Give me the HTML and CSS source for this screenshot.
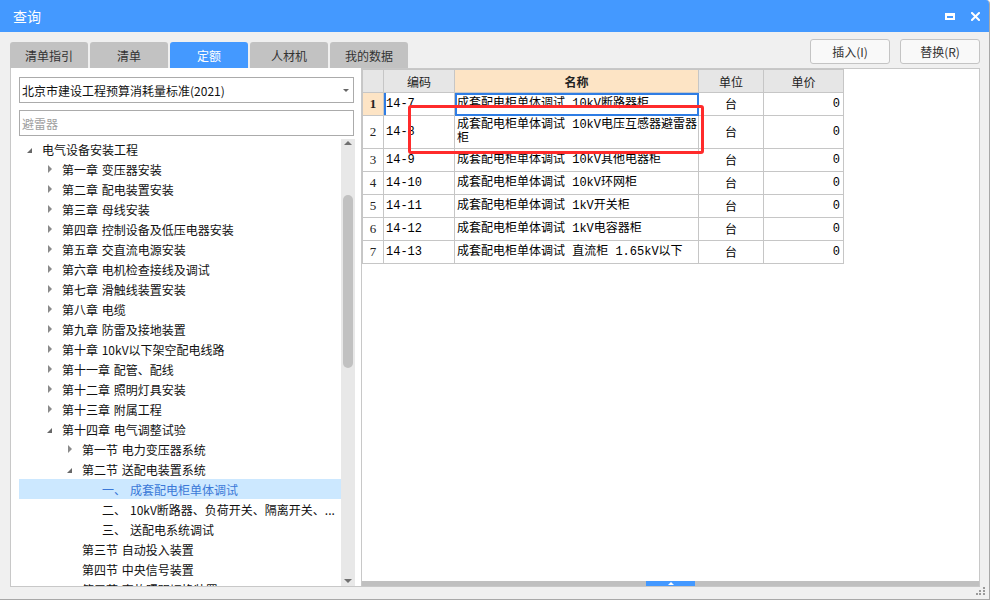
FILE: index.html
```html
<!DOCTYPE html>
<html lang="zh-CN">
<head>
<meta charset="utf-8">
<title>查询</title>
<link rel="stylesheet" href="styles.css">
</head>
<body>
<div class="window">
  <div class="titlebar">
    <span class="title">查询</span>
    <div class="ctrls">
      <svg class="ic-max" width="10" height="7" viewBox="0 0 10 7"><path d="M0 0H10V7H0Z M2 3V5H8V3Z" fill="#fff" fill-rule="evenodd"/></svg>
      <svg class="ic-close" width="9" height="9" viewBox="0 0 9 9"><path d="M1 1L8 8M8 1L1 8" stroke="#fff" stroke-width="2" stroke-linecap="square"/></svg>
    </div>
  </div>
  <div class="main">
    <div class="toprow">
      <div class="tabs">
        <div class="tab">清单指引</div>
        <div class="tab">清单</div>
        <div class="tab on">定额</div>
        <div class="tab">人材机</div>
        <div class="tab">我的数据</div>
      </div>
      <div class="btns">
        <button class="btn">插入(I)</button>
        <button class="btn">替换(R)</button>
      </div>
    </div>
    <div class="panes">
      <div class="left">
        <div class="select"><span>北京市建设工程预算消耗量标准(2021)</span><span class="caret"></span></div>
        <div class="search">避雷器</div>
        <div class="treewrap">
          <div class="tree">
            <div class="row l0"><span class="tg ex"></span><span class="tx">电气设备安装工程</span></div>
            <div class="row l1"><span class="tg co"></span><span class="tx">第一章 变压器安装</span></div>
            <div class="row l1"><span class="tg co"></span><span class="tx">第二章 配电装置安装</span></div>
            <div class="row l1"><span class="tg co"></span><span class="tx">第三章 母线安装</span></div>
            <div class="row l1"><span class="tg co"></span><span class="tx">第四章 控制设备及低压电器安装</span></div>
            <div class="row l1"><span class="tg co"></span><span class="tx">第五章 交直流电源安装</span></div>
            <div class="row l1"><span class="tg co"></span><span class="tx">第六章 电机检查接线及调试</span></div>
            <div class="row l1"><span class="tg co"></span><span class="tx">第七章 滑触线装置安装</span></div>
            <div class="row l1"><span class="tg co"></span><span class="tx">第八章 电缆</span></div>
            <div class="row l1"><span class="tg co"></span><span class="tx">第九章 防雷及接地装置</span></div>
            <div class="row l1"><span class="tg co"></span><span class="tx">第十章 10kV以下架空配电线路</span></div>
            <div class="row l1"><span class="tg co"></span><span class="tx">第十一章 配管、配线</span></div>
            <div class="row l1"><span class="tg co"></span><span class="tx">第十二章 照明灯具安装</span></div>
            <div class="row l1"><span class="tg co"></span><span class="tx">第十三章 附属工程</span></div>
            <div class="row l1"><span class="tg ex"></span><span class="tx">第十四章 电气调整试验</span></div>
            <div class="row l2"><span class="tg co"></span><span class="tx">第一节 电力变压器系统</span></div>
            <div class="row l2"><span class="tg ex"></span><span class="tx">第二节 送配电装置系统</span></div>
            <div class="row l3 sel"><span class="tg"></span><span class="tx"><span class="n">一、</span>成套配电柜单体调试</span></div>
            <div class="row l3"><span class="tg"></span><span class="tx"><span class="n">二、</span>10kV断路器、负荷开关、隔离开关、...</span></div>
            <div class="row l3"><span class="tg"></span><span class="tx"><span class="n">三、</span>送配电系统调试</span></div>
            <div class="row l2"><span class="tg"></span><span class="tx">第三节 自动投入装置</span></div>
            <div class="row l2"><span class="tg"></span><span class="tx">第四节 中央信号装置</span></div>
            <div class="row l2"><span class="tg"></span><span class="tx">第五节 事故照明切换装置</span></div>
          </div>
          <div class="vscroll">
            <span class="up"></span>
            <span class="vthumb"></span>
            <span class="dn"></span>
          </div>
        </div>
      </div>
      <div class="right">
        <table class="grid">
          <colgroup>
            <col class="c-no"><col class="c-code"><col class="c-name"><col class="c-unit"><col class="c-price">
          </colgroup>
          <thead>
            <tr>
              <th></th>
              <th>编码</th>
              <th class="hot">名称</th>
              <th>单位</th>
              <th>单价</th>
            </tr>
          </thead>
          <tbody>
            <tr>
              <td class="no cur-row">1</td>
              <td class="code mark">14-7</td>
              <td class="name cur">成套配电柜单体调试 10kV断路器柜</td>
              <td class="unit">台</td>
              <td class="price">0</td>
            </tr>
            <tr class="tall">
              <td class="no">2</td>
              <td class="code">14-8</td>
              <td class="name">成套配电柜单体调试 10kV电压互感器避雷器<br>柜</td>
              <td class="unit">台</td>
              <td class="price">0</td>
            </tr>
            <tr>
              <td class="no">3</td>
              <td class="code">14-9</td>
              <td class="name">成套配电柜单体调试 10kV其他电器柜</td>
              <td class="unit">台</td>
              <td class="price">0</td>
            </tr>
            <tr>
              <td class="no">4</td>
              <td class="code">14-10</td>
              <td class="name">成套配电柜单体调试 10kV环网柜</td>
              <td class="unit">台</td>
              <td class="price">0</td>
            </tr>
            <tr>
              <td class="no">5</td>
              <td class="code">14-11</td>
              <td class="name">成套配电柜单体调试 1kV开关柜</td>
              <td class="unit">台</td>
              <td class="price">0</td>
            </tr>
            <tr>
              <td class="no">6</td>
              <td class="code">14-12</td>
              <td class="name">成套配电柜单体调试 1kV电容器柜</td>
              <td class="unit">台</td>
              <td class="price">0</td>
            </tr>
            <tr>
              <td class="no">7</td>
              <td class="code">14-13</td>
              <td class="name">成套配电柜单体调试 直流柜 1.65kV以下</td>
              <td class="unit">台</td>
              <td class="price">0</td>
            </tr>
          </tbody>
        </table>
        <div class="hscroll"><div class="hthumb"><span class="hup"></span></div></div>
      </div>
    </div>
  </div>
  <div class="redbox"></div>
  <svg class="grip" width="10" height="10" viewBox="0 0 10 10">
    <rect x="7" y="1" width="2" height="2" fill="#9a9a9a"/>
    <rect x="3" y="4" width="2" height="2" fill="#9a9a9a"/>
    <rect x="7" y="4" width="2" height="2" fill="#9a9a9a"/>
    <rect x="0" y="7" width="2" height="2" fill="#9a9a9a"/>
    <rect x="3" y="7" width="2" height="2" fill="#9a9a9a"/>
    <rect x="7" y="7" width="2" height="2" fill="#9a9a9a"/>
  </svg>
</div>
</body>
</html>
```
FILE: styles.css
```css
* { box-sizing: border-box; }
body { margin: 0; }

.window {
  position: relative;
  width: 990px;
  height: 600px;
  background: #f0f0f0;
  border-right: 1px solid #a8a8a8;
  border-bottom: 1px solid #a8a8a8;
  border-top-right-radius: 4px;
  overflow: hidden;
  display: flex;
  flex-direction: column;
  font-family: "Noto Sans CJK SC", "Noto Sans", sans-serif;
  font-size: 12px;
  color: #1a1a1a;
}

.titlebar {
  height: 32px;
  flex: none;
  background: #4499ff;
  display: flex;
  align-items: center;
  padding: 0 9px 0 13px;
  color: #fff;
  font-size: 14px;
}
.ctrls { margin-left: auto; display: flex; align-items: center; gap: 16px; }
.ic-max, .ic-close { display: block; }

.main {
  flex: 1;
  display: flex;
  flex-direction: column;
  padding: 0 9px 12px 10px;
}

.toprow { height: 36px; flex: none; display: flex; }
.tabs { display: flex; gap: 2px; align-self: flex-end; }
.tab {
  width: 78px;
  height: 26px;
  background: #c2c2c2;
  border-radius: 3px 3px 0 0;
  display: flex;
  align-items: center;
  justify-content: center;
  color: #333;
  padding-top: 1px;
}
.tab.on { background: #4499ff; color: #fff; }

.btns { margin-left: auto; display: flex; gap: 10px; margin-top: 7px; height: 25px; }
.btn {
  width: 80px;
  height: 25px;
  background: #f9f9f9;
  border: 1px solid #c4c4c4;
  border-radius: 3px;
  font-family: inherit;
  font-size: 12px;
  color: #333;
  padding: 0;
}

.panes { height: 519px; flex: none; display: flex; }

.left {
  width: 351px;
  flex: none;
  background: #fff;
  border-left: 1px solid #c8c8c8;
  border-bottom: 1px solid #c8c8c8;
  padding: 9px 0 0 8px;
  display: flex;
  flex-direction: column;
}
.select {
  width: 335px;
  height: 26px;
  flex: none;
  border: 1px solid #ababab;
  display: flex;
  align-items: center;
  padding-left: 2px;
  color: #111;
}
.caret {
  margin-left: auto;
  margin-right: 4px;
  width: 0;
  height: 0;
  border-left: 3px solid transparent;
  border-right: 3px solid transparent;
  border-top: 3px solid #666;
}
.search {
  width: 335px;
  height: 26px;
  flex: none;
  margin-top: 7px;
  border: 1px solid #ababab;
  display: flex;
  align-items: center;
  padding-left: 2px;
  color: #a0a0a0;
}
.treewrap {
  margin-top: 3px;
  flex: 1;
  min-height: 0;
  display: flex;
  overflow: hidden;
}
.tree { width: 322px; flex: none; overflow: hidden; word-spacing: 1px; }
.row {
  height: 20px;
  display: flex;
  align-items: center;
  white-space: nowrap;
  color: #111;
}
.row.l0 { padding-left: 8px; }
.row.l1 { padding-left: 28px; }
.row.l2 { padding-left: 48px; }
.row.l3 { padding-left: 68px; }
.row.sel { background: #cce8ff; color: #3a78d8; }
.tg { width: 15px; flex: none; display: flex; align-items: center; height: 20px; }
.tg.co::before {
  content: "";
  display: block;
  width: 0;
  height: 0;
  margin-left: 1px;
  border-left: 4px solid #8a8a8a;
  border-top: 4px solid transparent;
  border-bottom: 4px solid transparent;
}
.tg.ex::before {
  content: "";
  display: block;
  width: 0;
  height: 0;
  margin-top: 2px;
  border-left: 5px solid transparent;
  border-bottom: 5px solid #686868;
}
.n { margin-right: 4px; }

.vscroll {
  width: 14px;
  flex: none;
  background: #e8e8e8;
  display: flex;
  flex-direction: column;
  align-items: center;
  padding-top: 2px;
}
.up {
  width: 0; height: 0;
  border-left: 4px solid transparent;
  border-right: 4px solid transparent;
  border-bottom: 4px solid #707070;
}
.vthumb {
  margin-top: 50px;
  width: 10px;
  height: 173px;
  border-radius: 5px;
  background: #c1c1c1;
}
.dn {
  margin-top: auto;
  margin-bottom: 3px;
  width: 0; height: 0;
  border-left: 4px solid transparent;
  border-right: 4px solid transparent;
  border-top: 4px solid #707070;
}

.right {
  flex: 1;
  background: #fff;
  border: 1px solid #c8c8c8;
  display: flex;
  flex-direction: column;
}

.grid {
  border-collapse: collapse;
  table-layout: fixed;
  width: 481px;
  font-size: 12px;
}
.c-no { width: 21px; }
.c-code { width: 71px; }
.c-name { width: 244px; }
.c-unit { width: 65px; }
.c-price { width: 80px; }

.grid th, .grid td {
  border: 1px solid #c6c6c6;
  padding: 0;
  overflow: hidden;
  white-space: nowrap;
}
.grid th {
  height: 23px;
  background: #e6e6e6;
  font-weight: normal;
  color: #222;
  text-align: center;
}
.grid th.hot { background: #fde4c5; font-weight: bold; }
.grid td {
  height: 23px;
  font-family: "Liberation Mono", "Noto Sans CJK SC", monospace;
  color: #000;
  line-height: 14px;
}
.grid tr.tall td { height: 33px; }
.grid td.no {
  font-family: "Liberation Serif", serif;
  font-size: 13px;
  text-align: center;
  color: #222;
}
.grid td.cur-row { background: #fde4c5; font-weight: bold; }
.grid td.code { padding-left: 2px; }
.grid td.mark { box-shadow: inset 2px 0 0 #2f7de4; }
.grid td.name { padding-left: 2px; white-space: normal; }
.grid td.cur { outline: 2px solid #2f7de4; outline-offset: -2px; }
.grid td.unit { text-align: center; font-family: "Noto Sans CJK SC", sans-serif; }
.grid td.price { text-align: right; padding-right: 3px; }

.hscroll {
  margin-top: auto;
  height: 5px;
  flex: none;
  background: #c0c0c0;
  display: flex;
}
.hthumb {
  margin-left: 284px;
  width: 49px;
  height: 5px;
  background: #4499ff;
  display: flex;
  align-items: center;
  justify-content: center;
}
.hup {
  width: 0; height: 0;
  border-left: 3px solid transparent;
  border-right: 3px solid transparent;
  border-bottom: 3px solid #fff;
}

.redbox {
  position: absolute;
  left: 408px;
  top: 105px;
  width: 296px;
  height: 49px;
  border: 3px solid #ff2b2b;
  border-radius: 3px;
}

.grip { position: absolute; right: 3px; bottom: 3px; display: block; }
```
